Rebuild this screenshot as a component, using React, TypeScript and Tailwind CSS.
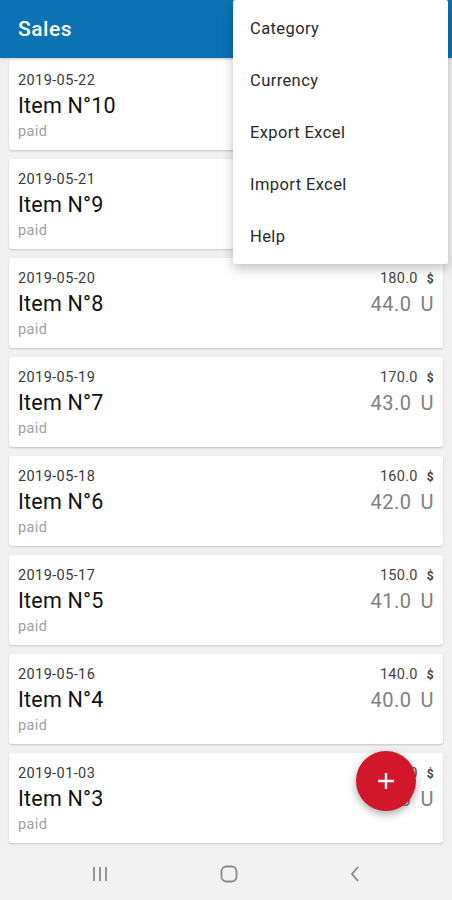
import React from 'react';

const sales = [
  { date: '2019-05-22', name: 'Item N°10', price: '200.0', units: '46.0' },
  { date: '2019-05-21', name: 'Item N°9', price: '190.0', units: '45.0' },
  { date: '2019-05-20', name: 'Item N°8', price: '180.0', units: '44.0' },
  { date: '2019-05-19', name: 'Item N°7', price: '170.0', units: '43.0' },
  { date: '2019-05-18', name: 'Item N°6', price: '160.0', units: '42.0' },
  { date: '2019-05-17', name: 'Item N°5', price: '150.0', units: '41.0' },
  { date: '2019-05-16', name: 'Item N°4', price: '140.0', units: '40.0' },
  { date: '2019-01-03', name: 'Item N°3', price: '130.0', units: '39.0' },
];

const menuItems = ['Category', 'Currency', 'Export Excel', 'Import Excel', 'Help'];

export default function App() {
  return (
    <div
      className="relative w-[452px] h-[900px] overflow-hidden bg-[#f0f0f0] flex flex-col"
      style={{ fontFamily: 'Roboto, "Noto Sans", sans-serif' }}
    >
      {/* App bar */}
      <header className="h-[58px] shrink-0 bg-[#0b72b4] flex items-center px-[18px] pt-[2px] shadow-sm">
        <h1 className="text-white text-[21px] font-medium tracking-[0.5px]">Sales</h1>
      </header>

      {/* Sales list */}
      <main className="flex-1 flex flex-col gap-[9px] px-[9px] pt-[2px] overflow-hidden">
        {sales.map((sale) => (
          <div
            key={sale.name}
            className="h-[90px] shrink-0 bg-white rounded-[3px] shadow-[0_1px_2px_rgba(0,0,0,0.18)] flex justify-between pl-[9px] pr-[9px] pt-[12px]"
          >
            <div className="flex flex-col">
              <span className="text-[14.5px] leading-[18px] tracking-[0.4px] text-[#3a3a3a]">{sale.date}</span>
              <span className="mt-[2px] text-[21.5px] leading-[28px] tracking-[0.2px] text-[#111]">{sale.name}</span>
              <span className="mt-[3px] text-[14.5px] leading-[18px] tracking-[0.4px] text-[#a0a0a0]">paid</span>
            </div>
            <div className="flex flex-col items-end">
              <span className="text-[14.5px] leading-[18px] tracking-[0.3px] text-[#444] flex items-center gap-[9px]">
                {sale.price}
                <span className="text-[12px] font-bold">$</span>
              </span>
              <span className="mt-[3px] text-[20px] leading-[26px] tracking-[0.5px] text-[#808080] flex gap-[9px]">
                {sale.units}
                <span>U</span>
              </span>
            </div>
          </div>
        ))}
      </main>

      {/* Android navigation bar */}
      <nav className="h-[52px] shrink-0 bg-[#f2f2f2] flex items-center justify-between px-[90px]">
        <svg width="20" height="18" viewBox="0 0 20 18" fill="none" stroke="#8a8a8a" strokeWidth="1.8">
          <path d="M4 2v14M10 2v14M16 2v14" />
        </svg>
        <svg width="20" height="20" viewBox="0 0 20 20" fill="none" stroke="#8a8a8a" strokeWidth="1.8">
          <rect x="2.5" y="2.5" width="15" height="15" rx="5" />
        </svg>
        <svg width="14" height="20" viewBox="0 0 14 20" fill="none" stroke="#8a8a8a" strokeWidth="1.8">
          <path d="M10 3L4 10l6 7" />
        </svg>
      </nav>

      {/* Floating action button */}
      <button className="absolute left-[356px] top-[751px] w-[60px] h-[60px] rounded-full bg-[#d2172a] shadow-[0_3px_8px_rgba(0,0,0,0.35)] flex items-center justify-center">
        <svg width="20" height="20" viewBox="0 0 20 20" stroke="white" strokeWidth="2.4">
          <path d="M10 2v16M2 10h16" />
        </svg>
      </button>

      {/* Overflow menu */}
      <div className="absolute left-[233px] top-0 w-[215px] bg-white rounded-[2px] shadow-[0_4px_12px_rgba(0,0,0,0.25)] pt-[3px]">
        {menuItems.map((item) => (
          <div key={item} className="h-[52.2px] flex items-center pl-[17px] text-[16.5px] tracking-[0.4px] text-[#2a2a2a]">
            {item}
          </div>
        ))}
      </div>
    </div>
  );
}
